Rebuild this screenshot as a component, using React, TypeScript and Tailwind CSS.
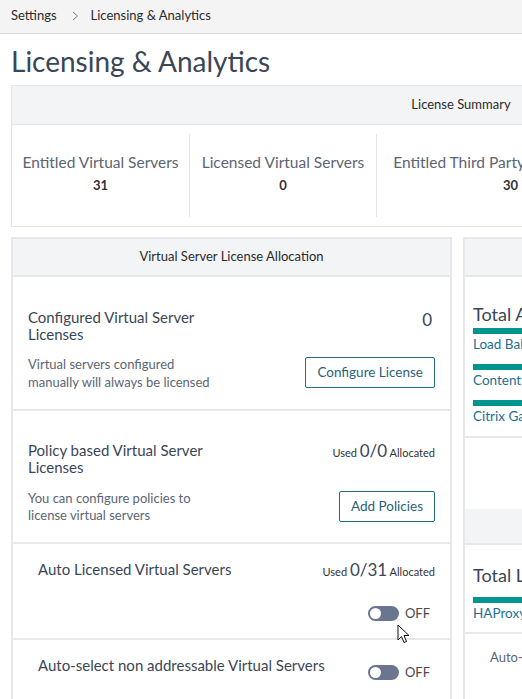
import React from 'react';

const font = { fontFamily: 'Lato, "Open Sans", sans-serif' };

function Toggle() {
  return (
    <div className="flex items-center gap-[6px]">
      <div className="w-[31px] h-[15px] rounded-full bg-[#6a7590] flex items-center px-[2px]">
        <div className="w-[11px] h-[11px] rounded-full bg-white" />
      </div>
      <span className="text-[13px] text-[#4a4a4a]">OFF</span>
    </div>
  );
}

function UsedCount({ value }: { value: string }) {
  return (
    <div className="text-[11px] text-[#333] whitespace-nowrap">
      Used <span className="text-[17px] text-[#3a4656]">{value}</span> Allocated
    </div>
  );
}

function Cursor() {
  return (
    <svg className="absolute left-[397px] top-[624px]" width="13" height="20" viewBox="0 0 13 20">
      <path d="M1 1 L1 16 L4.5 12.5 L7 18.5 L9.5 17.5 L7 11.5 L12 11.5 Z" fill="#fff" stroke="#111" strokeWidth="1" strokeLinejoin="round" />
    </svg>
  );
}

export default function App() {
  const stats = [
    { label: 'Entitled Virtual Servers', value: '31', w: 'w-[177px]' },
    { label: 'Licensed Virtual Servers', value: '0', w: 'w-[187px]' },
    { label: 'Entitled Third Party Virtual Servers', value: '30', w: 'w-[268px]' },
    { label: 'Licensed Third Party Virtual Servers', value: '0', w: 'w-[260px]' },
  ];

  return (
    <div className="relative w-[522px] h-[699px] overflow-hidden bg-white" style={font}>
      {/* Breadcrumb */}
      <div className="h-[34px] bg-[#f4f4f4] border-b border-[#dcdcdc] flex items-start pt-[6px] px-[11px] text-[13px] text-[#2b2b2b]">
        <span>Settings</span>
        <svg className="ml-[15px] mr-[12px] mt-[5px]" width="7" height="10" viewBox="0 0 7 10">
          <polyline points="1,1 5.5,5 1,9" fill="none" stroke="#777" strokeWidth="1" />
        </svg>
        <span>Licensing &amp; Analytics</span>
      </div>

      <div className="w-[920px] px-[11px]">
        <h1 className="text-[28px] leading-[34px] text-[#3a4656] mt-[10px] mb-[7px]">Licensing &amp; Analytics</h1>

        {/* License Summary */}
        <div className="w-[900px] border border-[#e3e5e8]">
          <div className="h-[39px] bg-[#f3f4f6] border-b border-[#e3e5e8] flex items-center justify-center text-[13px] text-[#2b2b2b]">
            License Summary
          </div>
          <div className="flex py-[9px] h-[101px]">
            {stats.map((s, i) => (
              <div key={s.label} className={`${s.w} shrink-0 flex flex-col items-center justify-center whitespace-nowrap pb-[5px] ${i > 0 ? 'border-l border-[#e3e5e8]' : ''}`}>
                <div className="text-[15.5px] text-[#5b6573] leading-[20px]">{s.label}</div>
                <div className="text-[13px] font-bold text-[#333] leading-[20px] mt-[3px]">{s.value}</div>
              </div>
            ))}
          </div>
        </div>

        <div className="flex gap-[11px] mt-[10px]">
          {/* Left card */}
          <div className="w-[441px] shrink-0 border-2 border-[#e6e8eb]">
            <div className="h-[38px] bg-[#f3f4f6] border-b-2 border-[#e6e8eb] flex items-center justify-center text-[13px] text-[#2b2b2b]">
              Virtual Server License Allocation
            </div>

            <div className="h-[134px] border-b-2 border-[#e6e8eb] px-[15px] pt-[32px] flex justify-between">
              <div>
                <div className="text-[15px] leading-[17px] text-[#3a4656]">
                  <div>Configured Virtual Server</div>
                  <div>Licenses</div>
                </div>
                <div className="text-[13px] leading-[18px] text-[#5b6573] mt-[12px]">
                  <div>Virtual servers configured</div>
                  <div>manually will always be licensed</div>
                </div>
              </div>
              <div className="flex flex-col items-end">
                <div className="text-[17px] text-[#3a4656] leading-[20px] pr-[3px] mt-[1px]">0</div>
                <button className="mt-[27px] h-[31px] px-[11px] border border-[#1f6e80] rounded-[2px] text-[13.5px] text-[#2b5f78]">
                  Configure License
                </button>
              </div>
            </div>

            <div className="h-[133px] border-b-2 border-[#e6e8eb] px-[15px] pt-[31px] flex justify-between">
              <div>
                <div className="text-[15px] leading-[17px] text-[#3a4656]">
                  <div>Policy based Virtual Server</div>
                  <div>Licenses</div>
                </div>
                <div className="text-[13px] leading-[17px] text-[#5b6573] mt-[14px]">
                  <div>You can configure policies to</div>
                  <div>license virtual servers</div>
                </div>
              </div>
              <div className="flex flex-col items-end">
                <div className="-mt-[4px]"><UsedCount value="0/0" /></div>
                <button className="mt-[27px] h-[31px] px-[11px] border border-[#1f6e80] rounded-[2px] text-[13.5px] text-[#2b5f78]">
                  Add Policies
                </button>
              </div>
            </div>

            <div className="h-[96px] border-b-2 border-[#e6e8eb] pl-[25px] pr-[15px] pt-[15px] flex justify-between">
              <div className="text-[15px] leading-[20px] text-[#3a4656]">Auto Licensed Virtual Servers</div>
              <div className="flex flex-col items-end">
                <div className="-mt-[2px]"><UsedCount value="0/31" /></div>
                <div className="mt-[21px] pr-[5px]"><Toggle /></div>
              </div>
            </div>

            <div className="h-[58px] pl-[25px] pr-[20px] pt-[15px] flex justify-between">
              <div className="text-[15px] leading-[20px] text-[#3a4656]">Auto-select non addressable Virtual Servers</div>
              <div className="mt-[8px]"><Toggle /></div>
            </div>
          </div>

          {/* Right column */}
          <div className="w-[441px] shrink-0 border-2 border-[#e6e8eb] h-[500px]">
            <div className="h-[38px] bg-[#f3f4f6] border-b-2 border-[#e6e8eb] flex items-center justify-center text-[13px] text-[#2b2b2b]">
              Virtual Server Licenses
            </div>
            <div className="h-[161px] border-b-2 border-[#e6e8eb] px-[8px] pt-[27px]">
              <div className="text-[18px] leading-[20px] text-[#3a4656]">Total Allocated Virtual Servers</div>
              {['Load Balancing', 'Content Switching', 'Citrix Gateway'].map((l, i) => (
                <div key={l} className={i === 0 ? 'mt-[4px]' : 'mt-[10px]'}>
                  <div className="h-[6px] w-[300px] bg-[#00968f]" />
                  <div className="text-[13.5px] leading-[20px] text-[#1c6f93]">{l}</div>
                </div>
              ))}
            </div>
            <div className="h-[71px]" />
            <div className="h-[36px] bg-[#f3f4f6] border-b-2 border-[#e6e8eb] flex items-center justify-center text-[13px] text-[#2b2b2b]">
              Third Party Virtual Servers
            </div>
            <div className="h-[89px] border-b-2 border-[#e6e8eb] px-[8px] pt-[20px]">
              <div className="text-[18px] leading-[20px] text-[#3a4656]">Total Licensed Third Party Virtual Servers</div>
              <div className="mt-[12px] h-[6px] w-[300px] bg-[#00968f]" />
              <div className="text-[13.5px] leading-[20px] text-[#1c6f93]">HAProxy</div>
            </div>
            <div className="pl-[25px] pt-[14px] text-[13px] text-[#5b6573]">Auto-select non addressable Third Party Virtual Servers</div>
          </div>
        </div>
      </div>

      <Cursor />
    </div>
  );
}
